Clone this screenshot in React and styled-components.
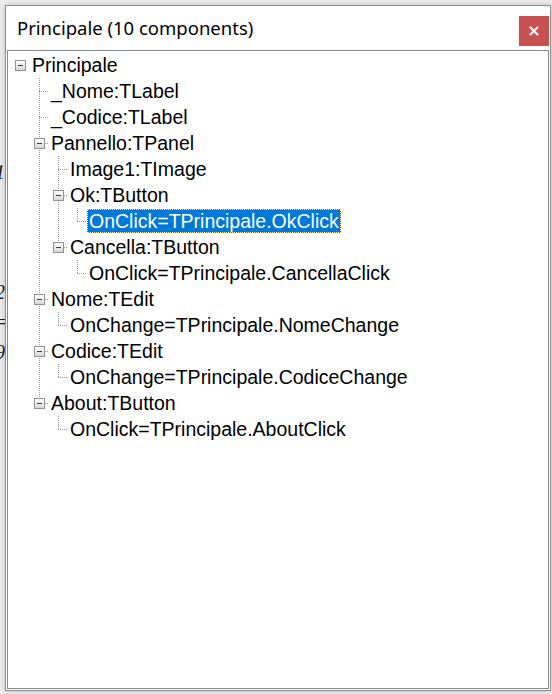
import React from 'react'
import styled, { createGlobalStyle } from 'styled-components'

const GlobalStyle = createGlobalStyle`
  html, body {
    margin: 0;
    padding: 0;
    background: #eeeeee;
    overflow: hidden;
  }
`

const Page = styled.div`
  position: relative;
  width: 552px;
  height: 694px;
  padding: 5px 0 0 5px;
  box-sizing: border-box;
  display: flex;
  align-items: flex-start;
`

// bits of the editor that peek out behind the window
const Backdrop = styled.div`
  position: absolute;
  left: -5px;
  top: 0;
  display: flex;
  flex-direction: column;
  font-family: 'Liberation Serif', serif;
  font-style: italic;
  font-size: 20px;
  color: #1a1a1a;
  line-height: 30px;
`

const BackLine = styled.span`
  margin-top: ${(p) => p.$top}px;
`

const Window = styled.div`
  position: relative;
  z-index: 1;
  width: 546px;
  height: 686px;
  box-sizing: border-box;
  border: 1px solid #8d8d8d;
  background: #ffffff;
  box-shadow: 0 0 6px rgba(0, 0, 0, 0.22);
  display: flex;
  flex-direction: column;
`

const TitleBar = styled.div`
  height: 44px;
  flex: none;
  display: flex;
  align-items: center;
  padding: 0 1px 0 11px;
`

const Title = styled.div`
  flex: 1;
  font-family: 'Noto Sans', 'Open Sans', sans-serif;
  font-size: 18.5px;
  color: #000;
  margin-top: -1px;
`

const CloseButton = styled.button`
  align-self: flex-start;
  margin-top: 10px;
  width: 30px;
  height: 30px;
  border: none;
  padding: 0;
  background: #c75050;
  color: #fff;
  font-family: 'DejaVu Sans', sans-serif;
  font-weight: bold;
  font-size: 16px;
  line-height: 30px;
`

const Panel = styled.div`
  flex: 1;
  margin: 0 1px 1px 1px;
  border: 1px solid #828790;
  background: #fff;
  padding: 1px 0 0 3px;
  font-family: 'Liberation Sans', Arial, sans-serif;
  font-size: 19.5px;
  color: #000;
`

const Row = styled.div`
  display: flex;
  align-items: center;
  height: 26px;
`

const dotV = 'repeating-linear-gradient(to bottom, #9a9a9a 0 1px, transparent 1px 2px)'
const dotH = 'repeating-linear-gradient(to right, #9a9a9a 0 1px, transparent 1px 2px)'

const Cell = styled.span`
  position: relative;
  flex: none;
  width: 19px;
  height: 26px;

  &::before {
    content: '';
    display: ${(p) => (p.$v ? 'block' : 'none')};
    position: absolute;
    left: 9px;
    top: 0;
    width: 1px;
    height: ${(p) => (p.$v === 'half' ? '14px' : '26px')};
    background: ${dotV};
  }

  &::after {
    content: '';
    display: ${(p) => (p.$h ? 'block' : 'none')};
    position: absolute;
    left: 9px;
    top: 13px;
    width: 10px;
    height: 1px;
    background: ${dotH};
  }
`

const ExpandBox = styled.span`
  position: absolute;
  z-index: 1;
  left: 4px;
  top: 8px;
  width: 11px;
  height: 11px;
  box-sizing: border-box;
  border: 1px solid #919191;
  background: linear-gradient(#ffffff, #d6d6d6);

  &::after {
    content: '';
    position: absolute;
    left: 2px;
    top: 4px;
    width: 5px;
    height: 1px;
    background: #1f3a93;
  }
`

const Label = styled.span`
  height: 24px;
  line-height: 24px;
  padding: 0 2px;
  box-sizing: border-box;
  white-space: nowrap;
  background: ${(p) => (p.$selected ? '#0078d7' : 'transparent')};
  color: ${(p) => (p.$selected ? '#fff' : '#000')};
  outline: ${(p) => (p.$selected ? '1px dotted #f3e9a6' : 'none')};
  outline-offset: -1px;
`

const tree = {
  label: 'Principale',
  children: [
    { label: '_Nome:TLabel' },
    { label: '_Codice:TLabel' },
    {
      label: 'Pannello:TPanel',
      children: [
        { label: 'Image1:TImage' },
        { label: 'Ok:TButton', children: [{ label: 'OnClick=TPrincipale.OkClick', selected: true }] },
        { label: 'Cancella:TButton', children: [{ label: 'OnClick=TPrincipale.CancellaClick' }] },
      ],
    },
    { label: 'Nome:TEdit', children: [{ label: 'OnChange=TPrincipale.NomeChange' }] },
    { label: 'Codice:TEdit', children: [{ label: 'OnChange=TPrincipale.CodiceChange' }] },
    { label: 'About:TButton', children: [{ label: 'OnClick=TPrincipale.AboutClick' }] },
  ],
}

const flatten = (node, depth, trail, isLast, out) => {
  out.push({ node, depth, trail, isLast })
  const kids = node.children || []
  kids.forEach((child, i) => {
    const nextTrail = depth === 0 ? [] : [...trail, !isLast]
    flatten(child, depth + 1, nextTrail, i === kids.length - 1, out)
  })
  return out
}

const rows = flatten(tree, 0, [], true, [])

const TreeRow = ({ node, depth, trail, isLast }) => {
  const hasKids = !!(node.children && node.children.length)
  const cells = []
  if (depth === 0) {
    cells.push(
      <Cell key="own">{hasKids && <ExpandBox />}</Cell>
    )
  } else {
    cells.push(<Cell key="root" />)
    trail.forEach((open, i) => cells.push(<Cell key={i} $v={open ? 'full' : null} />))
    cells.push(
      <Cell key="own" $v={isLast ? 'half' : 'full'} $h>
        {hasKids && <ExpandBox />}
      </Cell>
    )
  }
  return (
    <Row>
      {cells}
      <Label $selected={node.selected}>{node.label}</Label>
    </Row>
  )
}

const App = () => {
  return (
    <Page>
      <GlobalStyle />
      <Backdrop>
        <BackLine $top={157}>1</BackLine>
        <BackLine $top={90}>2</BackLine>
        <BackLine $top={0}>=</BackLine>
        <BackLine $top={0}>9</BackLine>
      </Backdrop>
      <Window>
        <TitleBar>
          <Title>Principale (10 components)</Title>
          <CloseButton>×</CloseButton>
        </TitleBar>
        <Panel>
          {rows.map((r, i) => (
            <TreeRow key={i} {...r} />
          ))}
        </Panel>
      </Window>
    </Page>
  )
}

export default App
